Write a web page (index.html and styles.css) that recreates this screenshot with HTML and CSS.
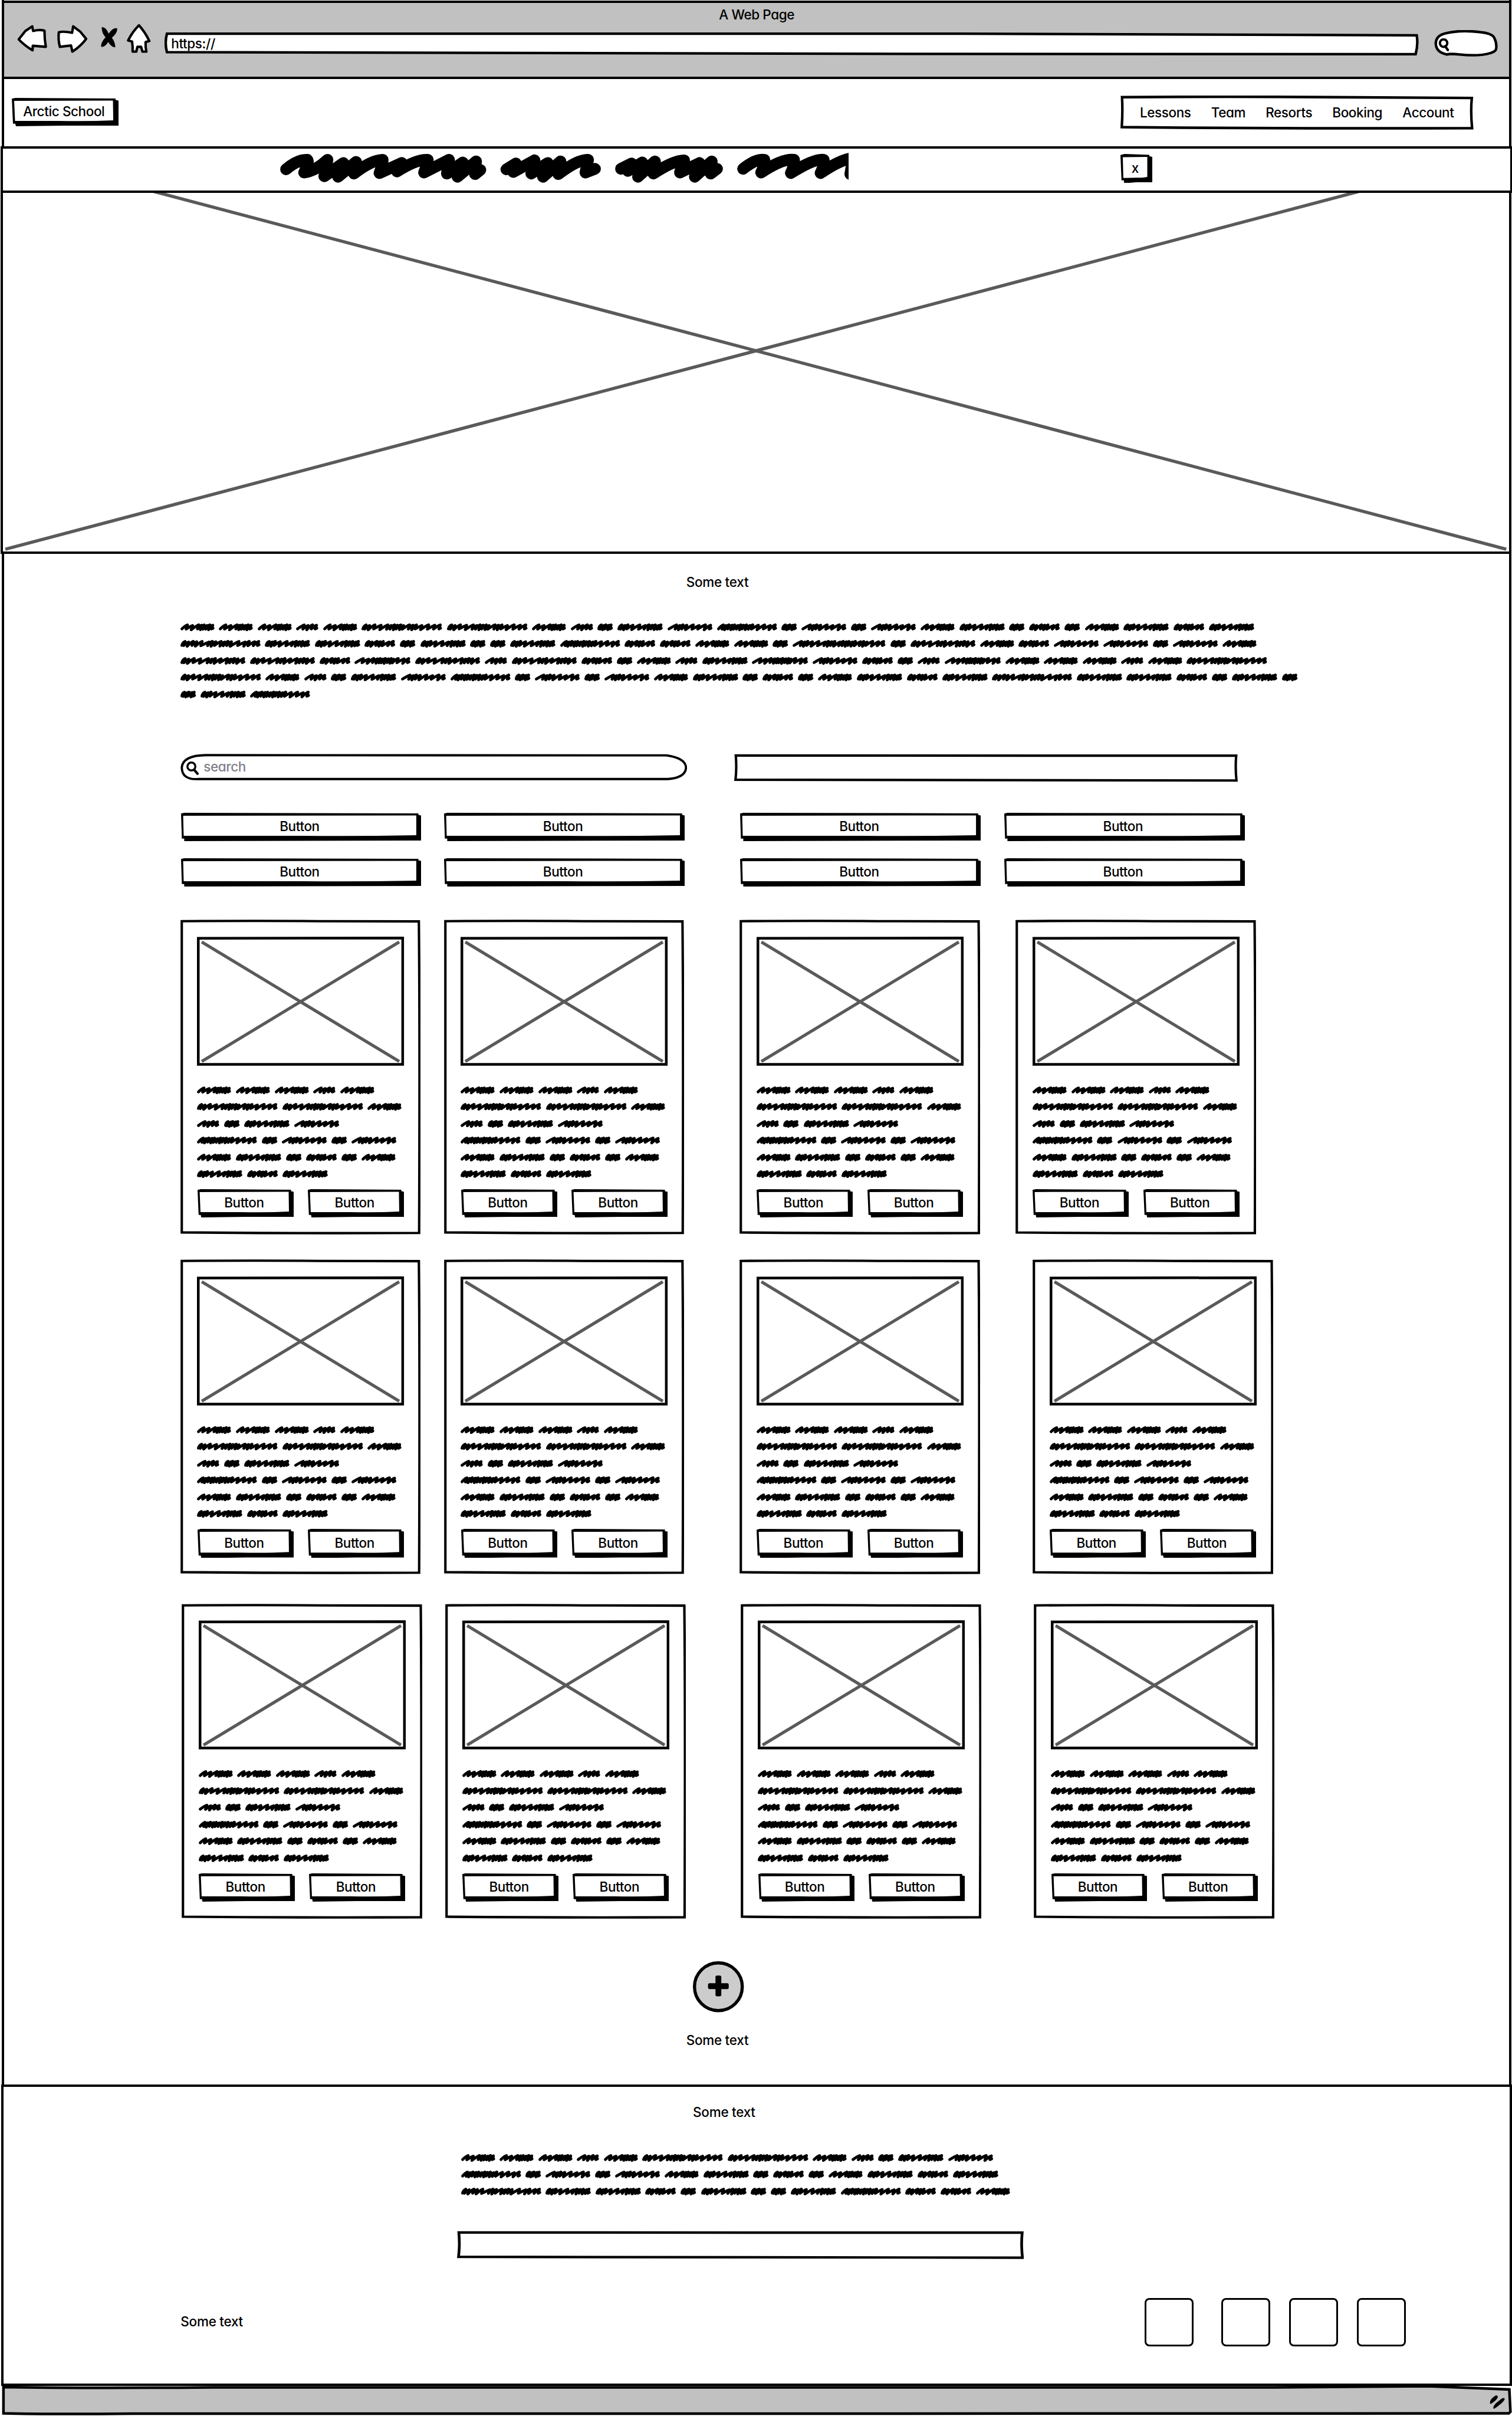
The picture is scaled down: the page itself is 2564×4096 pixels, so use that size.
FILE: index.html
```html
<!DOCTYPE html>
<html lang="en">
<head>
<meta charset="utf-8">
<title>A Web Page</title>
<link rel="stylesheet" href="styles.css">
</head>
<body>
<div class="window">
  <header class="chrome">
    <div class="chrome-title">A Web Page</div>
    <div class="toolbar">
      <svg class="tools" viewBox="28 43 282 80">
        <g fill="#fff" stroke="#000" stroke-width="4.6" stroke-linejoin="round">
          <path d="M35.5 75 L48 59 L61 50.500 L62.500 59 Q75 56 84 58.500 Q84 75 86.500 89 L62 87 L61.500 95.500 Q46 86 35.500 75Z"/>
          <path d="M162.500 74 L151 60 L138 50.500 L136 62.500 Q120 59 111 61.500 Q109.500 76 113 89 L134 86.500 L136.500 98 Q152 88 162.500 74Z"/>
          <path d="M262 48.500 Q274 62 281.500 78 L274.500 80 Q274 90 276 98 L268.500 98 L266 89 L259 89 L257 98 L250 98 Q250.500 88 249 79 L241.500 77 Q250 60 262 48.500Z"/>
        </g>
        <path d="M192 52 Q199 51 205 64 Q213 52 221 54 Q222 62 211 72 Q217 80 217.500 90 Q210 90 204 80 Q198 90 191 89 Q189 82 199 71 Q191 62 192 52Z"/>
      </svg>
      <div class="address">https://</div>
      <div class="quick-search">
        <svg viewBox="0 0 22 26"><circle cx="10" cy="9" r="7" fill="none" stroke="#000" stroke-width="4.400"/><path d="M13 15 L18 22" stroke="#000" stroke-width="4.600" stroke-linecap="round"/></svg>
      </div>
    </div>
  </header>

  <div class="site-bar">
    <a class="btn logo">Arctic School</a>
    <nav class="menu"><a>Lessons</a><a>Team</a><a>Resorts</a><a>Booking</a><a>Account</a></nav>
  </div>

  <div class="banner">
    <svg class="banner-copy" viewBox="0 0 1100 76">
      <g fill="none" stroke="#000" stroke-width="22" stroke-linecap="round" stroke-linejoin="round">
        <path d="M40 39 Q62 20 80 21 Q84 26 74 45 Q96 42 118 21 L112 52 L148 27 L138 53 L172 25 L168 47 Q200 22 222 21 Q222 30 216 46 L258 27 L249 43 Q285 20 307 21 Q306 30 300 45 L347 21 L343 47 L373 26 L363 53 L398 24 L396 48 L406 40"/>
        <path d="M455 39 L473 28 L468 44 L508 22 L502 47 L533 27 L524 53 L557 24 L553 48 Q590 20 609 21 L604 45 L622 38"/>
        <path d="M671 38 L691 28 L684 42 L711 26 L703 53 L735 24 L732 47 Q770 22 790 22 L782 45 L819 27 L810 53 L842 24 L840 47 L852 38"/>
        <path d="M901 38 Q926 18 941 21 Q942 32 935 45 Q976 18 997 21 Q998 32 991 46 Q1036 18 1053 21 Q1054 32 1047 46 Q1085 20 1108 18 L1103 48"/>
      </g>
    </svg>
    <button class="btn close">x</button>
  </div>

  <section class="hero">
    <svg viewBox="6.500 363 2834 674" preserveAspectRatio="none"><path d="M10 286.300 L2835 1033 M2838 286.300 L11 1033" stroke="#5a5a5a" stroke-width="6" fill="none"/></svg>
  </section>

  <main class="content">
    <h1 class="label intro-title">Some text</h1>
    <div class="scribble intro" data-lines="AAABADDABCEFGCFCFAECHCAEHE IEEHCECCEGHHAACJCKAHFFCFA KKHLKBKHCABELFHCBLAAABAD DABCEFGCFCFAECHCAEHEIEEHCEC CEG"></div>
    <div class="search-row">
      <div class="search">
        <svg viewBox="0 0 24 26"><circle cx="9.500" cy="9.500" r="7.500" fill="none" stroke="#000" stroke-width="3.800"/><path d="M15 16 L21 23" stroke="#000" stroke-width="4.600" stroke-linecap="round"/></svg>
        <span>search</span>
      </div>
      <div class="field"></div>
    </div>
    <div class="filters">
      <button class="btn wide">Button</button><button class="btn wide">Button</button><button class="btn wide">Button</button><button class="btn wide">Button</button>
      <button class="btn wide">Button</button><button class="btn wide">Button</button><button class="btn wide">Button</button><button class="btn wide">Button</button>
    </div>
    <div class="card-row first"><article class="card"></article><article class="card"></article><article class="card"></article><article class="card"></article></div>
    <div class="card-row second"><article class="card"></article><article class="card"></article><article class="card"></article><article class="card"></article></div>
    <div class="card-row third"><article class="card"></article><article class="card"></article><article class="card"></article><article class="card"></article></div>
    <svg class="add" viewBox="0 0 96 96"><circle cx="48" cy="48" r="45" fill="#ccc" stroke="#000" stroke-width="6"/><rect x="42.500" y="27" width="11" height="39" rx="3"/><rect x="28.500" y="41.500" width="39" height="11" rx="3"/></svg>
    <p class="label more-label">Some text</p>
  </main>

  <footer class="footer">
    <h2 class="label footer-title">Some text</h2>
    <div class="scribble footer-copy" data-lines="AAABADDABCEF GCFCFAECHCAEHE IEEHCECCEGHHA"></div>
    <div class="field footer-field"></div>
    <div class="footer-row">
      <p class="label">Some text</p>
      <div class="social"><i></i><i></i><i></i><i></i></div>
    </div>
  </footer>
</div>
<svg class="status" viewBox="0 0 2848 60" preserveAspectRatio="none">
  <path d="M6.500 5.500 Q160 8 400 6 L2400 6 L2690 4 L2843 10 L2845 52 L2842 55 L1700 55.500 L250 55.500 Q100 57 6.500 55Z" fill="#c1c1c1" stroke="#000" stroke-width="5"/>
  <path d="M2808 36 Q2807 31 2813 26 Q2819 20 2820 24 Q2820 28 2808 36Z M2814 45 Q2814 40 2822 34 Q2832 25 2833 28 Q2831 34 2814 45Z" stroke="#000" stroke-width="2.500" stroke-linejoin="round"/>
</svg>

<template id="card">
  <svg class="picture" viewBox="0 0 390 243"><path d="M2.500 3 L387.500 2.500 L387.500 240.500 L2.500 240.500Z" fill="#fff" stroke="#000" stroke-width="5"/><path d="M9 10 L381 235 M381 10 L9 235" stroke="#5a5a5a" stroke-width="5.800"/></svg>
  <div class="scribble" data-lines="AAABA DDA BCEF GCFCF AECHCA EHE"></div>
  <div class="actions"><button class="btn small">Button</button><button class="btn small">Button</button></div>
</template>
<script src="app.js"></script>
</body>
</html>
```
FILE: styles.css
```css
/* 1rem is a tenth of a unit of the 2848-unit wide layout: everything scales with the window */
html { font-size: calc(100vw / 284.8); }
* { box-sizing: border-box; margin: 0; padding: 0; }
body {
  width: 100vw; height: 455rem; overflow: hidden; background: #fff; color: #000;
  font: 550 2.5rem/3rem Inter, "Liberation Sans", sans-serif;
  font-feature-settings: "cv11"; letter-spacing: -.018em;
}
svg { display: block; }
a, button { color: inherit; font: inherit; letter-spacing: inherit; font-feature-settings: inherit; }
.label { font-size: 2.5rem; font-weight: 550; line-height: 3rem; letter-spacing: -.012em; white-space: nowrap; }

.window { height: 449.3rem; margin: 0 .1rem 0 .36rem; padding-top: .1rem; border: solid #000; border-width: 0 .55rem 0 .49rem; }

/* browser chrome */
.chrome { height: 14.75rem; background: #c1c1c1; border: solid #000; border-width: .47rem 0 .5rem; }
.chrome-title { padding-top: .73rem; height: 3.73rem; text-align: center; }
.toolbar { display: flex; align-items: flex-start; padding-left: 1.95rem; }
.tools { width: 28.2rem; height: 8rem; }
.address {
  width: 236.3rem; height: 4.5rem; margin-top: 1.8rem; padding: .55rem 0 0 1.3rem;
  background: url("data:image/svg+xml,%3Csvg xmlns='http://www.w3.org/2000/svg' viewBox='0 0 2363 45' preserveAspectRatio='none'%3E%3Cpath d='M4.500 2.500 L1500 2.500 L2359 5.500 Q2362 22 2357 41.500 L1400 41 L4.500 37.500 Q0 20 4.500 2.500Z' fill='%23fff' stroke='%23000' stroke-width='4.800'/%3E%3C/svg%3E") 0 0 / 100% 100%;
}
.quick-search {
  width: 12rem; height: 5rem; margin: 1.4rem 0 0 2.9rem; padding: 1.6rem 0 0 .8rem;
  background: url("data:image/svg+xml,%3Csvg xmlns='http://www.w3.org/2000/svg' viewBox='0 0 120 50' preserveAspectRatio='none'%3E%3Cpath d='M3 26 Q3 10 22 6 Q50 -1 88 4 Q108 6 113 14 Q118 24 117 34 Q117 40 107 43 Q85 50 48 46 Q30 44 24 46 Q4 42 3 26Z' fill='%23fff' stroke='%23000' stroke-width='4.800'/%3E%3C/svg%3E") 0 0 / 100% 100%;
}
.quick-search svg { width: 2.2rem; height: 2.6rem; }

/* hand-drawn raised buttons */
.btn {
  display: block; flex: none; height: 5.37rem; padding: 1.04rem .55rem 1.33rem 0; border: 0;
  text-align: center; vertical-align: top; line-height: 3rem; background: 0 0 / 100% 100% no-repeat;
}
.wide {
  width: 45.3rem;
  background-image: url("data:image/svg+xml,%3Csvg xmlns='http://www.w3.org/2000/svg' viewBox='0 0 453 53.7' preserveAspectRatio='none'%3E%3Cpath d='M0 1.500 L6 0 L448 1 L448 4 L453 5 L453 52.500 L6 53.700 L6 49 L1.500 49Z'/%3E%3Cpath d='M4 5.500 L444 5 L444 42.500 Q330 44.500 230 43.500 L5 43.500Z' fill='%23fff'/%3E%3C/svg%3E");
}
.small, .logo {
  width: 18.1rem;
  background-image: url("data:image/svg+xml,%3Csvg xmlns='http://www.w3.org/2000/svg' viewBox='0 0 181 53.7' preserveAspectRatio='none'%3E%3Cpath d='M0 1.500 L6 0 L176 1 L176 4 L181 5 L181 52.500 L90 52.500 L7 53.700 L6 49 L2 49Z'/%3E%3Cpath d='M4 5.500 L171.500 5 L172 42.500 Q130 44.500 80 43.500 L5.500 43.500Z' fill='%23fff'/%3E%3C/svg%3E");
}
.logo { width: 20.1rem; margin-top: .4rem; }
.close {
  width: 6.05rem; margin: 1rem 0 0 51.2rem;
  background-image: url("data:image/svg+xml,%3Csvg xmlns='http://www.w3.org/2000/svg' viewBox='0 0 60.500 53.700' preserveAspectRatio='none'%3E%3Cpath d='M0 2 L8 0 L55 1.500 L55 4 L60.500 5.500 L60.500 52 L30 52 L7 53.700 L6.500 48.500 L2 48.500Z'/%3E%3Cpath d='M4.500 6 L51 5.500 L51 42 Q45 44 30 43.500 L5.500 44Z' fill='%23fff'/%3E%3C/svg%3E");
}

/* site bar */
.site-bar { display: flex; justify-content: space-between; align-items: flex-start; height: 12.75rem; padding: 3.15rem 6.65rem 0 1.45rem; }
.menu {
  display: flex; justify-content: space-between; width: 66.55rem; height: 6.4rem; padding: 1.64rem 3.75rem 0 3.65rem;
  background: url("data:image/svg+xml,%3Csvg xmlns='http://www.w3.org/2000/svg' viewBox='0 0 665.5 64' preserveAspectRatio='none'%3E%3Cpath d='M3 3 Q200 1.500 400 3 L662 4.500 Q659.500 30 662.500 61 Q300 62 2.500 59 Q4.500 30 3 3Z' fill='%23fff' stroke='%23000' stroke-width='4.800'/%3E%3C/svg%3E") 0 0 / 100% 100%;
}

.banner { display: flex; align-items: flex-start; height: 8.7rem; margin: 0 -.65rem 0 -.7rem; background: #fff; border: .55rem solid #000; }
.banner-copy { width: 110rem; height: 7.6rem; margin-left: 49.3rem; overflow: hidden; flex: none; }
.hero { height: 67.95rem; margin: 0 -.45rem 0 -.7rem; background: #fff; border: solid #000; border-width: 0 .5rem .5rem; }
.hero svg { width: 100%; height: 100%; }

/* scribbled placeholder copy */
.line { display: flex; gap: .86rem; height: 3.16rem; }
.line svg { height: 1.46rem; flex: none; overflow: visible; }

.content { height: 288.35rem; padding-left: 33.15rem; }
.intro-title { padding: 3.87rem 0 0 95.3rem; }
.intro { margin-top: 6.28rem; }
.search-row { display: flex; gap: 8.9rem; margin-top: 8.8rem; height: 5.3rem; }
.search {
  display: flex; width: 95.4rem; height: 5rem; padding: .9rem 0 0 1.2rem; color: #80808a;
  background: url("data:image/svg+xml,%3Csvg xmlns='http://www.w3.org/2000/svg' viewBox='0 0 954 50' preserveAspectRatio='none'%3E%3Cpath d='M48 2.500 L915 3 Q951 8 952 26 Q951 45 918 47.500 L35 47.500 Q3 50 2.500 26 Q4 3 48 2.500Z' fill='%23fff' stroke='%23000' stroke-width='4.200'/%3E%3C/svg%3E") 0 0 / 100% 100%;
}
.search svg { width: 2.4rem; height: 2.6rem; margin: .5rem .8rem 0 0; }
.field {
  width: 94.9rem; height: 5.3rem;
  background: url("data:image/svg+xml,%3Csvg xmlns='http://www.w3.org/2000/svg' viewBox='0 0 949 53' preserveAspectRatio='none'%3E%3Cpath d='M3 3 Q300 2 600 3.500 L946 3.500 Q944 26 946.500 50 Q400 51 2.500 48.500 Q5 26 3 3Z' fill='%23fff' stroke='%23000' stroke-width='4.600'/%3E%3C/svg%3E") 0 0 / 100% 100%;
}
.filters { display: grid; grid-template-columns: 49.6rem 55.8rem 49.7rem 45.3rem; row-gap: 3.22rem; margin: 5.73rem 0 0 .1rem; }

/* cards */
.card-row { display: flex; }
.first { margin-top: 6.21rem; }
.second { margin-top: 4.7rem; }
.third { margin: 5.5rem 0 0 .25rem; }
.card {
  flex: none; width: 45.3rem; height: 59.3rem; padding: 3.2rem 0 0 3.2rem; margin-right: 4.35rem;
  background: url("data:image/svg+xml,%3Csvg xmlns='http://www.w3.org/2000/svg' viewBox='0 0 453 593' preserveAspectRatio='none'%3E%3Cpath d='M2.500 3 Q150 2 260 3 L450 3.500 Q452 200 450.500 590 Q220 591 2.500 589 Q3.500 300 2.500 3Z' fill='%23fff' stroke='%23000' stroke-width='4.600'/%3E%3C/svg%3E") 0 0 / 100% 100%;
}
.card:nth-child(2) { margin-right: 10.4rem; }
.card:nth-child(3) { margin-right: 9.9rem; }
.first .card:nth-child(3) { margin-right: 6.7rem; }
.card .picture { width: 39rem; height: 24.3rem; }
.card .scribble { margin-top: 3.9rem; height: 19.36rem; }
.actions { display: flex; gap: 2.7rem; padding-left: .05rem; }

.add { width: 9.6rem; height: 9.6rem; margin: 8.1rem 0 0 96.6rem; }
.more-label { margin: 3.67rem 0 0 95.3rem; }

/* footer */
.footer { height: 56.7rem; margin: 0 -.5rem 0 -.62rem; border: .53rem solid #000; background: #fff; }
.footer-title { padding: 3.15rem 0 0 129.9rem; }
.footer-copy { margin: 6.47rem 0 0 86.2rem; }
.footer-field { width: 106.7rem; margin: 4.98rem 0 0 85.5rem; }
.footer-row { display: flex; justify-content: space-between; align-items: flex-start; margin-top: 7.3rem; padding: 0 19.5rem 0 33.4rem; }
.footer-row .label { padding-top: 2.95rem; }
.social { display: flex; gap: 3.6rem; }
.social i { width: 9.2rem; height: 9.2rem; border: .42rem solid #000; border-radius: .9rem; }
.social i:first-child { margin-right: 1.6rem; }

.status { width: 100%; height: 6rem; margin-top: -.3rem; position: relative; }
```
FILE: app.js
```javascript
// Each placeholder word: its width, then the advance of every pen stroke in it.
const WORDS = {
  A: [64.2, [9, 9, 11, 5, 4.5, 5, 5, 5]],
  B: [42, [11, 7, 8, 7]],
  C: [29.3, [4, 5, 4, 6, 4]],
  D: [151.8, [4, 5, 8, 9, 10, 5, 5, 4, 5, 4, 9, 5, 5, 8, 10, 9, 8]],
  E: [85.4, [4, 5, 5, 8, 11, 9, 6, 5, 5, 5, 4]],
  F: [84.6, [11, 5, 5, 6, 10, 9, 10, 8]],
  G: [113, [7, 4, 5, 5, 4, 5, 5, 4, 5, 5, 5, 9, 10, 9, 8]],
  H: [58, [4, 5, 8, 5, 5, 9, 7]],
  I: [150.9, [4, 5, 7, 5, 8, 10, 5, 5, 8, 5, 5, 5, 11, 9, 6, 8, 6]],
  J: [175, [11, 5, 5, 7, 10, 10, 5, 5, 5, 8, 5, 5, 4, 5, 5, 8, 5, 5, 9, 9, 8]],
  K: [122.4, [4, 5, 8, 9, 11, 5, 5, 8, 9, 5, 5, 5, 8]],
  L: [105.7, [12, 9, 9, 6, 5, 4, 5, 5, 5, 4, 8, 10, 8]]
};
const PEAKS = [2.8, 3.8, 2.6, 3.4];
const TROUGHS = [10.6, 11.8, 10.3, 11.6, 10.8];

// Slanted pen strokes: a leaning rise to each peak, then a short drop to the trough.
function drawWord(key) {
  const [width, strokes] = WORDS[key];
  const scale = (width - 7) / strokes.reduce((sum, s) => sum + s, 0);
  let x = 2.7;
  let d = `M${x} 10.2`;
  strokes.forEach((s, i) => {
    const peak = PEAKS[i % PEAKS.length];
    const trough = TROUGHS[i % TROUGHS.length];
    const next = x + s * scale;
    d += `Q${(next - 3.5).toFixed(1)} ${peak + 1.6} ${(next + 1).toFixed(1)} ${peak}`;
    d += `L${(next - 1.6).toFixed(1)} ${i === strokes.length - 1 ? 10.4 : trough}`;
    x = next;
  });
  d += `L${width - 2.8} 9`;
  return `<svg viewBox="0 0 ${width} 14.6" style="width:${width / 10}rem"><path d="${d}" fill="none" stroke="#000" stroke-width="5.3" stroke-linecap="round" stroke-linejoin="round"/></svg>`;
}

const template = document.getElementById("card");
document.querySelectorAll(".card").forEach(card => card.append(template.content.cloneNode(true)));
document.querySelectorAll(".scribble").forEach(block => {
  block.innerHTML = block.dataset.lines.split(" ")
    .map(line => `<div class="line">${[...line].map(drawWord).join("")}</div>`).join("");
});
```
